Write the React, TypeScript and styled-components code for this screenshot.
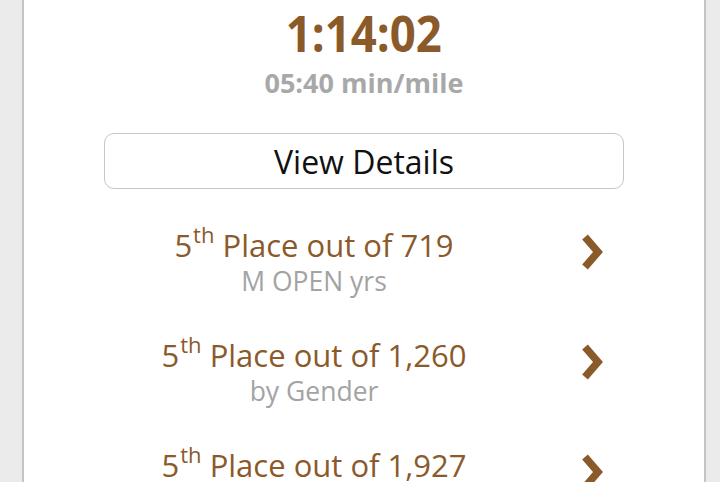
import React from "react";
import styled, { createGlobalStyle } from "styled-components";

const GlobalStyle = createGlobalStyle`
  html, body {
    margin: 0;
    padding: 0;
    height: 100%;
    background: #ebebeb;
  }
  #root {
    height: 100%;
  }
`;

const Page = styled.div`
  height: 482px;
  overflow: hidden;
  padding: 0 14px 0 22px;
  font-family: "Open Sans", "Noto Sans", sans-serif;
`;

const Card = styled.div`
  min-height: 100%;
  background: #fff;
  border-left: 2px solid #c4c4c4;
  border-right: 2px solid #c4c4c4;
  display: flex;
  flex-direction: column;
  align-items: stretch;

  & > * {
    flex-shrink: 0;
  }
`;

const Summary = styled.div`
  display: flex;
  flex-direction: column;
  align-items: center;
  padding-top: 3px;
`;

// the time is set in a narrower cut than the rest of the page
const Time = styled.div`
  font-size: 50px;
  line-height: 60px;
  font-weight: 700;
  color: #8b5a2b;
  transform: scaleX(0.91);
`;

const Pace = styled.div`
  margin-top: 4px;
  font-size: 27px;
  line-height: 32px;
  font-weight: 700;
  color: #a8a8a8;
`;

const DetailsButton = styled.button`
  margin: 34px 80px 0;
  height: 56px;
  box-sizing: border-box;
  border: 1.5px solid #c6c6c6;
  border-radius: 10px;
  background: #fff;
  font-family: inherit;
  font-size: 32px;
  color: #111;
  display: flex;
  align-items: center;
  justify-content: center;
  padding: 0;
`;

const Rankings = styled.div`
  margin-top: 19px;
  padding: 0 100px 0 80px;
  display: flex;
  flex-direction: column;
`;

const Row = styled.div`
  display: grid;
  grid-template-columns: 1fr 80px;
  padding: 19px 0;
  height: 72px;
  flex-shrink: 0;
`;

const RowText = styled.div`
  display: flex;
  flex-direction: column;
  align-items: center;
`;

const Place = styled.div`
  font-size: 31px;
  line-height: 36px;
  color: #8b5a2b;
  white-space: nowrap;
`;

const Ordinal = styled.span`
  font-size: 22px;
  line-height: 0;
  vertical-align: 14px;
  margin-left: 1px;
`;

const Category = styled.div`
  font-size: 26.5px;
  line-height: 36px;
  color: #a3a3a3;
  white-space: nowrap;
`;

const Chevron = styled.svg`
  justify-self: end;
  margin-top: 5px;
  width: 24px;
  height: 40px;
`;

interface Ranking {
  place: number;
  total: string;
  label?: string;
}

const rankings: Ranking[] = [
  { place: 5, total: "719", label: "M OPEN yrs" },
  { place: 5, total: "1,260", label: "by Gender" },
  { place: 5, total: "1,927" },
];

const ChevronIcon = () => (
  <Chevron viewBox="0 0 24 40">
    <polyline
      points="5,5 18,20 5,35"
      fill="none"
      stroke="#8b5a2b"
      strokeWidth={7.5}
      strokeLinejoin="miter"
    />
  </Chevron>
);

const App: React.FC = () => {
  return (
    <>
      <GlobalStyle />
      <Page>
        <Card>
          <Summary>
            <Time>1:14:02</Time>
            <Pace>05:40 min/mile</Pace>
          </Summary>
          <DetailsButton>View Details</DetailsButton>
          <Rankings>
            {rankings.map((r, i) => (
              <Row key={i}>
                <RowText>
                  <Place>
                    {r.place}
                    <Ordinal>th</Ordinal> Place out of {r.total}
                  </Place>
                  {r.label && <Category>{r.label}</Category>}
                </RowText>
                <ChevronIcon />
              </Row>
            ))}
          </Rankings>
        </Card>
      </Page>
    </>
  );
};

export default App;
